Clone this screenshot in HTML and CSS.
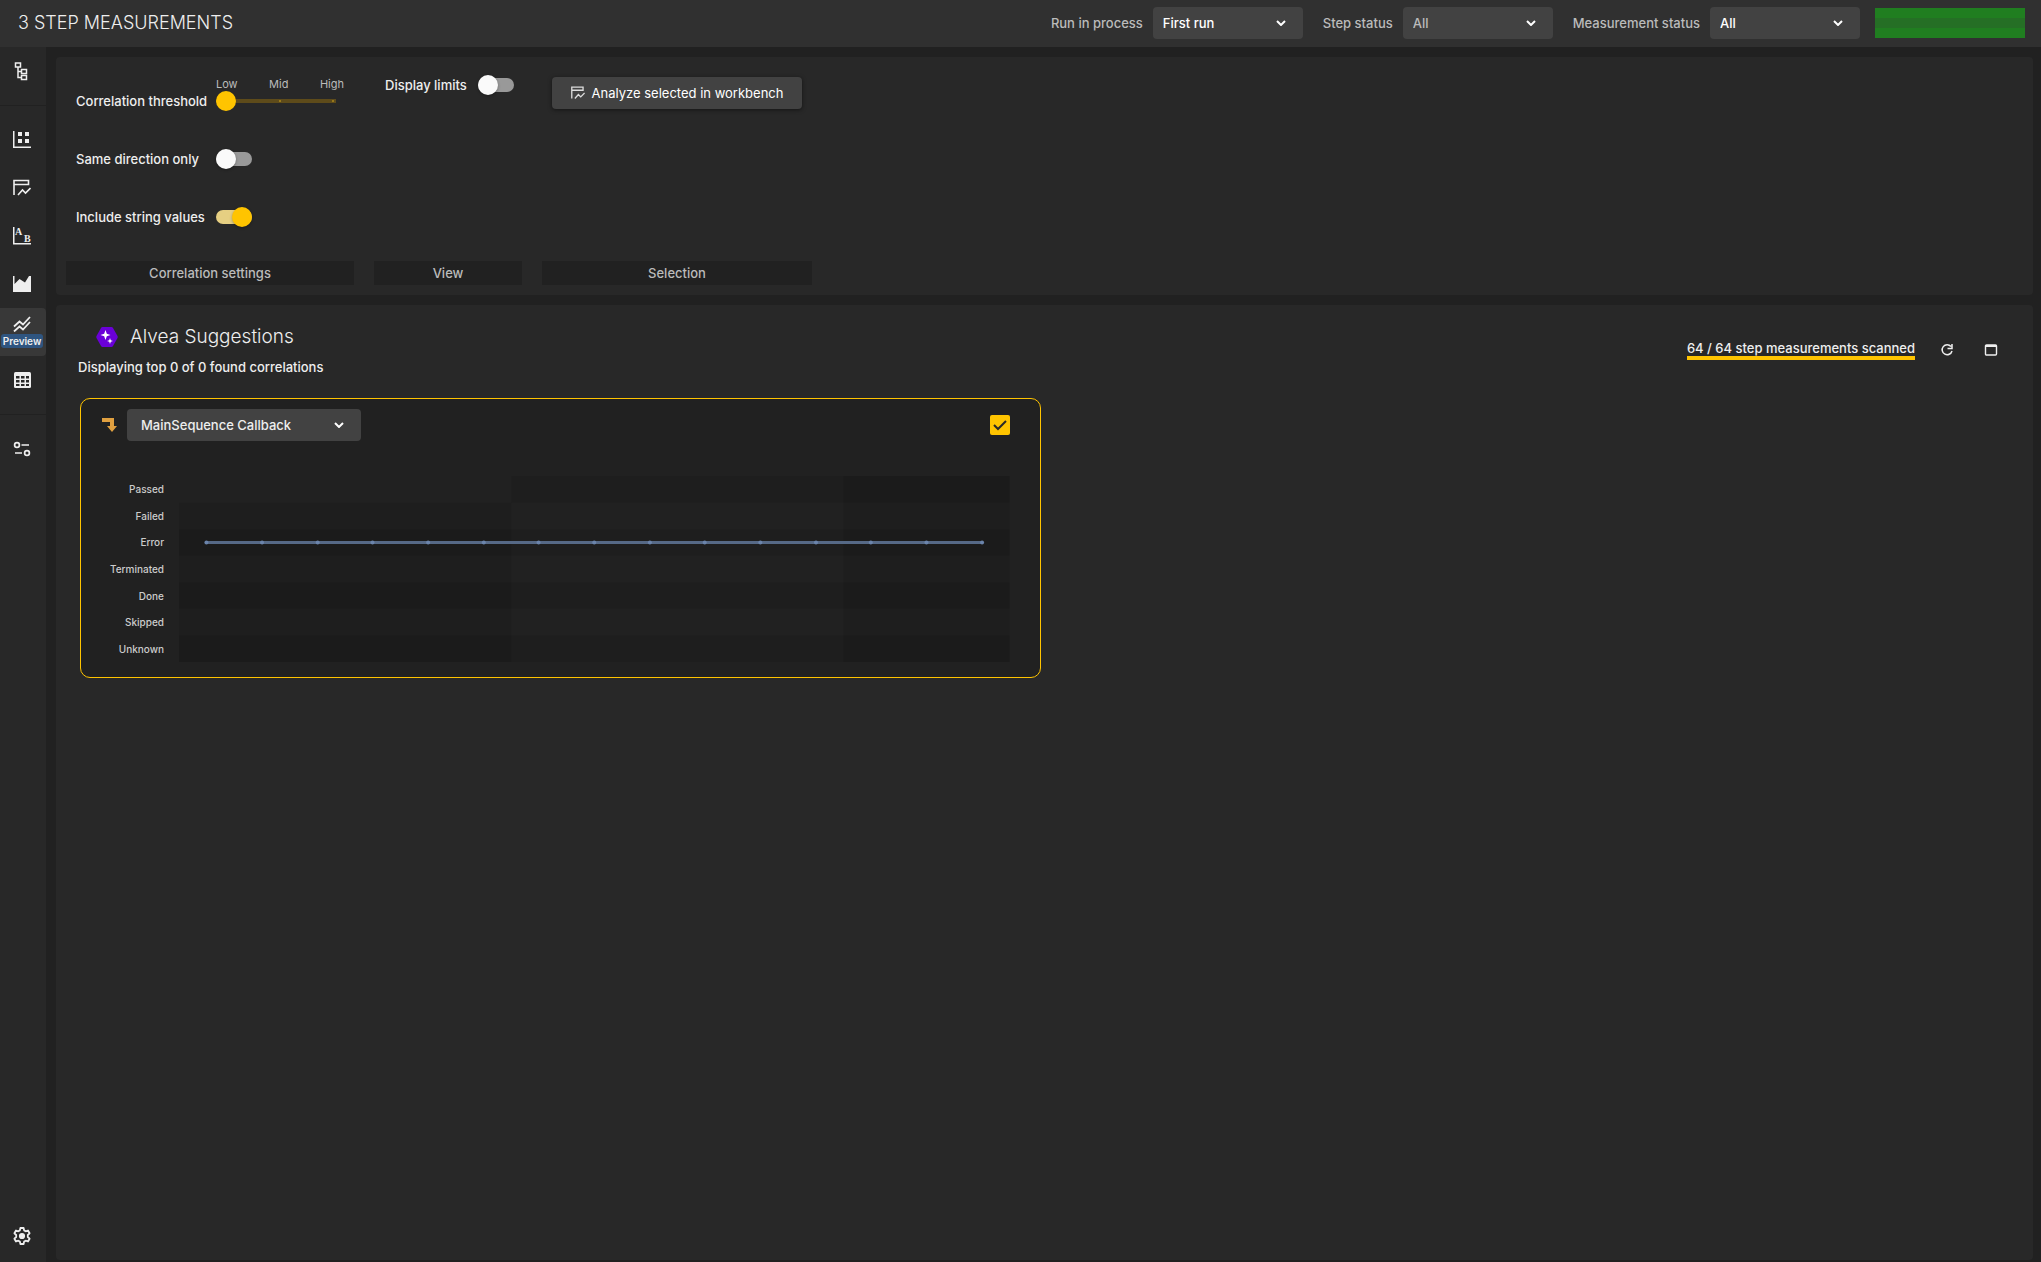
FILE: index.html
```html
<!DOCTYPE html>
<html lang="en">
<head>
    <meta charset="UTF-8">
    <meta name="viewport" content="width=device-width, initial-scale=1.0">
    <title>Step Measurements</title>
    <link rel="stylesheet" href="styles.css">
</head>
<body>

<header class="topbar">
    <h1>3 STEP MEASUREMENTS</h1>
    <div class="filters">
        <div class="filter">
            <label for="run">Run in process</label>
            <select id="run"><option>First run</option></select>
        </div>
        <div class="filter">
            <label for="stepStatus">Step status</label>
            <select id="stepStatus" class="muted"><option>All</option></select>
        </div>
        <div class="filter">
            <label for="measurementStatus">Measurement status</label>
            <select id="measurementStatus"><option>All</option></select>
        </div>
    </div>
    <div class="status-bar"></div>
</header>

<div class="layout">
    <nav class="sidebar">
        <div class="nav-group">
            <a href="#tree" aria-label="Tree">
                <svg width="18" height="20" viewBox="0 0 18 20" fill="none" stroke="#eee" stroke-width="1.5"><path d="M2.5 2h5v4h-5zM8.5 8.5h5v4h-5zM8.5 14.5h5v4h-5zM5 6v10.500h3.500M5 10.500h3.500"/></svg>
            </a>
        </div>
        <div class="nav-group">
            <a href="#overview" aria-label="Overview">
                <svg width="18" height="18" viewBox="0 0 18 18" fill="#eee"><path d="M0 0h1.500v15.500H18V17H0zM5 1h4v4H5zM12 1h4v4h-4zM5 8h4v4H5zM12 8h4v4h-4z"/></svg>
            </a>
            <a href="#workbench" aria-label="Workbench">
                <svg width="18" height="18" viewBox="0 0 18 18" fill="none" stroke="#eee" stroke-width="1.600"><path d="M1 16V1.500h14.500V5.500H1M5 16l4.500-5 3 3L17.500 9"/></svg>
            </a>
            <a href="#compare" aria-label="Compare">
                <svg width="18" height="18" viewBox="0 0 18 18" fill="#eee"><path d="M0 0h1.500v16H18v1.500H0z"/><text x="2" y="8" class="icon-letter">A</text><text x="11" y="15" class="icon-letter">B</text></svg>
            </a>
            <a href="#area" aria-label="Area chart">
                <svg width="18" height="18" viewBox="0 0 18 18" fill="#eee"><path d="M0 1h1.500v8L6.500 4l5.500 3.500L16 1h2v16H0z"/></svg>
            </a>
            <a href="#correlations" class="active">
                <svg width="18" height="16" viewBox="0 0 18 16" fill="none" stroke="#eee" stroke-width="1.800"><path d="M1 10.500l5.500-5 3.500 3 7-7.500M1 15.500l5.500-5 3.500 3 7-7.500"/></svg>
                <span class="badge">Preview</span>
            </a>
            <a href="#table" aria-label="Table">
                <svg width="18" height="18" viewBox="0 0 18 18"><rect x="1" y="1" width="17" height="16" rx="1.500" fill="#eee"/><path d="M3 5h3.500v2.500H3zM8 5h3.500v2.500H8zM13 5h3v2.500h-3zM3 9h3.500v2.500H3zM8 9h3.500v2.500H8zM13 9h3v2.500h-3zM3 13h3.500v2H3zM8 13h3.500v2H8zM13 13h3v2h-3z" fill="#282828"/></svg>
            </a>
        </div>
        <div class="nav-group">
            <a href="#filters" aria-label="Filters">
                <svg width="18" height="16" viewBox="0 0 18 16" fill="none" stroke="#eee" stroke-width="1.700"><circle cx="4" cy="4" r="2.400"/><path d="M8.500 4H16M2 12h7"/><circle cx="14" cy="12" r="2.400"/></svg>
            </a>
        </div>
        <a href="#settings" class="settings" aria-label="Settings">
            <svg width="18" height="18" viewBox="0 0 18 18" fill="none" stroke="#eee" stroke-width="1.800" stroke-linejoin="round"><path d="M7.400 1h3.200l.5 2.400 1.600.9 2.300-.8 1.600 2.800L14.800 8v2l1.800 1.700-1.600 2.800-2.300-.8-1.600.9-.5 2.400H7.400l-.5-2.400-1.600-.9-2.300.8-1.600-2.800L3.200 10V8L1.400 6.300 3 3.500l2.300.8 1.600-.9z"/><circle cx="9" cy="9" r="2.200" fill="#eee"/></svg>
        </a>
    </nav>

    <main>
        <section class="panel toolbar">
            <div class="group group-settings">
                <div class="setting">
                    <label for="threshold">Correlation threshold</label>
                    <div class="slider">
                        <div class="ticks"><span>Low</span><span>Mid</span><span>High</span></div>
                        <input type="range" id="threshold" min="0" max="2" value="0">
                    </div>
                </div>
                <div class="setting">
                    <label for="direction">Same direction only</label>
                    <input type="checkbox" class="switch" id="direction">
                </div>
                <div class="setting">
                    <label for="strings">Include string values</label>
                    <input type="checkbox" class="switch" id="strings" checked>
                </div>
                <h2>Correlation settings</h2>
            </div>
            <div class="group group-view">
                <div class="limits">
                    <label for="limits">Display limits</label>
                    <input type="checkbox" class="switch" id="limits">
                </div>
                <h2>View</h2>
            </div>
            <div class="group group-selection">
                <button type="button" class="analyze">
                    <svg width="14" height="14" viewBox="0 0 18 18" fill="none" stroke="#ddd" stroke-width="1.700"><path d="M1 16V1.500h14.500V5.500H1M5 16l4.500-5 3 3L17.500 9"/></svg>
                    Analyze selected in workbench
                </button>
                <h2>Selection</h2>
            </div>
        </section>

        <section class="panel suggestions">
            <div class="suggestions-header">
                <div>
                    <div class="heading">
                        <svg width="22" height="22" viewBox="0 0 22 22"><path d="M6.500 1h9q1 0 1.500 1l4.500 8q.5 1 0 2L17 20q-.5 1-1.500 1h-9q-1 0-1.500-1L.5 12q-.5-1 0-2L5 2q.5-1 1.500-1z" fill="#6a00d8"/><path d="M9.500 4l1.300 3.700L14.500 9l-3.700 1.300L9.500 14l-1.300-3.700L4.500 9l3.700-1.300zM14 12l.8 2.200 2.200.8-2.200.8L14 18l-.8-2.200L11 15l2.200-.8z" fill="#fff"/></svg>
                        <h2>Alvea Suggestions</h2>
                    </div>
                    <p>Displaying top 0 of 0 found correlations</p>
                </div>
                <div class="scan">
                    <span class="scanned">64 / 64 step measurements scanned</span>
                    <button type="button" class="icon-btn" aria-label="Refresh">
                        <svg width="14" height="14" viewBox="0 0 14 14" fill="none" stroke="#eee" stroke-width="1.500"><path d="M11 3.500A5 5 0 1 0 12 8M12 1v4.500H7.500"/></svg>
                    </button>
                    <button type="button" class="icon-btn" aria-label="Full window">
                        <svg width="14" height="14" viewBox="0 0 14 14" fill="none" stroke="#eee" stroke-width="1.400"><rect x="1.500" y="2" width="11" height="10" rx="1"/><path d="M1.500 3h11" stroke-width="2"/></svg>
                    </button>
                </div>
            </div>

            <div class="cards">
                <article class="card">
                    <div class="card-header">
                        <svg width="16" height="16" viewBox="0 0 16 16" fill="#e0a040"><path d="M1 1h12v8h3l-5 6-5-6h3V5H1z"/></svg>
                        <select aria-label="Step"><option>MainSequence Callback</option></select>
                        <input type="checkbox" class="tick" aria-label="Select step" checked>
                    </div>
                    <div class="chart">
                        <div class="axis">
                            <span>Passed</span>
                            <span>Failed</span>
                            <span>Error</span>
                            <span>Terminated</span>
                            <span>Done</span>
                            <span>Skipped</span>
                            <span>Unknown</span>
                        </div>
                        <svg class="plot">
                            <g class="bands">
                                <rect x="40%" y="0" width="60%" height="14.3%"/>
                                <rect x="0" y="28.6%" width="100%" height="14.3%"/>
                                <rect x="0" y="57.1%" width="100%" height="14.3%"/>
                                <rect x="0" y="85.7%" width="100%" height="14.3%"/>
                                <rect x="0" y="14.3%" width="40%" height="85.7%"/>
                                <rect x="80%" y="0" width="20%" height="100%"/>
                            </g>
                            <line x1="3.3%" y1="35.7%" x2="96.7%" y2="35.7%"/>
                            <g class="points">
                                <circle cx="3.3%" cy="35.7%" r="2"/>
                                <circle cx="10%" cy="35.7%" r="2"/>
                                <circle cx="16.7%" cy="35.7%" r="2"/>
                                <circle cx="23.3%" cy="35.7%" r="2"/>
                                <circle cx="30%" cy="35.7%" r="2"/>
                                <circle cx="36.7%" cy="35.7%" r="2"/>
                                <circle cx="43.3%" cy="35.7%" r="2"/>
                                <circle cx="50%" cy="35.7%" r="2"/>
                                <circle cx="56.7%" cy="35.7%" r="2"/>
                                <circle cx="63.3%" cy="35.7%" r="2"/>
                                <circle cx="70%" cy="35.7%" r="2"/>
                                <circle cx="76.7%" cy="35.7%" r="2"/>
                                <circle cx="83.3%" cy="35.7%" r="2"/>
                                <circle cx="90%" cy="35.7%" r="2"/>
                                <circle cx="96.7%" cy="35.7%" r="2"/>
                            </g>
                        </svg>
                    </div>
                </article>
            </div>
        </section>
    </main>
</div>

</body>
</html>
```

FILE: styles.css
```css
* {
    margin: 0;
    padding: 0;
    box-sizing: border-box;
}

body {
    display: flex;
    flex-direction: column;
    min-height: 100vh;
    background: #212121;
    color: #eee;
    font-family: Inter, sans-serif;
    font-size: 13px;
    font-weight: 500;
    line-height: 16px;
}

svg {
    display: block;
    flex-shrink: 0;
}

/* Top bar */
.topbar {
    display: flex;
    align-items: center;
    height: 47px;
    padding: 0 16px 1px 18px;
    background: #303030;
}

.topbar h1 {
    margin-right: auto;
    font-size: 18px;
    font-weight: 300;
    line-height: 24px;
}

.filters {
    display: flex;
    gap: 20px;
    margin-right: 15px;
}

.filter {
    display: flex;
    align-items: center;
    gap: 10px;
}

.filter label {
    color: #bbb;
}

select {
    appearance: none;
    width: 150px;
    height: 32px;
    padding: 0 36px 0 10px;
    border: none;
    border-radius: 4px;
    background: #424242 url("data:image/svg+xml,%3Csvg xmlns='http://www.w3.org/2000/svg' width='10' height='6' fill='none' stroke='white' stroke-width='2'%3E%3Cpath d='M1 1l4 4 4-4'/%3E%3C/svg%3E") no-repeat right 17px center;
    color: #fff;
    font: inherit;
}

select.muted {
    color: #bbb;
}

.status-bar {
    width: 150px;
    height: 30px;
    background: linear-gradient(#207e20 10px, #256f25 10px, #256f25 20px, #207e20 20px);
}

/* Sidebar */
.layout {
    display: flex;
    flex: 1;
}

.sidebar {
    display: flex;
    flex-direction: column;
    width: 46px;
    padding-bottom: 2px;
    background: #282828;
}

.nav-group {
    padding: 10px 0;
    border-bottom: 1px solid #212121;
}

.nav-group:first-child {
    padding-top: 0;
}

.nav-group:nth-child(3) {
    border-bottom: none;
}

.sidebar a {
    display: flex;
    flex-direction: column;
    align-items: center;
    justify-content: center;
    height: 48px;
    padding-right: 2px;
    color: #eee;
    text-decoration: none;
}

.sidebar .active {
    gap: 2px;
    border-radius: 0 4px 4px 0;
    background: #383838;
}

.sidebar .settings {
    margin-top: auto;
}

.icon-letter {
    font: 700 10px "Liberation Serif", serif;
}

.badge {
    padding: 0 2px;
    border-radius: 3px;
    background: #2f5580;
    font-size: 10px;
    font-weight: 600;
    line-height: 14px;
}

/* Panels */
main {
    display: flex;
    flex: 1;
    flex-direction: column;
    gap: 10px;
    padding: 10px 8px 2px 10px;
}

.panel {
    border-radius: 4px;
    background: #282828;
}

.toolbar {
    display: flex;
    gap: 20px;
    padding: 10px;
}

.group {
    display: flex;
    flex-direction: column;
}

.group-settings {
    width: 288px;
}

.group-view {
    width: 148px;
}

.group-selection {
    width: 270px;
}

.group h2 {
    margin-top: auto;
    background: #212121;
    color: #bbb;
    font-size: 13px;
    font-weight: 500;
    line-height: 24px;
    text-align: center;
}

.setting {
    display: grid;
    grid-template-columns: 140px 1fr;
    align-items: center;
    height: 58px;
    padding-left: 10px;
    line-height: 20px;
}

.setting:first-child {
    height: 63px;
    align-items: end;
    padding-bottom: 19px;
}

.setting:nth-child(3) {
    margin-bottom: 15px;
}

.slider {
    width: 128px;
}

.ticks {
    display: flex;
    justify-content: space-between;
    color: #bbb;
    font-size: 11px;
    font-weight: 400;
    line-height: 14px;
}

/* Track with a dot at the middle and last step */
input[type="range"] {
    display: block;
    appearance: none;
    width: 120px;
    height: 20px;
    background:
        linear-gradient(#97781b, #97781b) no-repeat 63px 9px / 2px 2px,
        linear-gradient(#97781b, #97781b) no-repeat 116px 9px / 2px 2px,
        linear-gradient(#5e4b1a, #5e4b1a) no-repeat center / 100% 4px;
}

input[type="range"]::-webkit-slider-thumb {
    appearance: none;
    width: 20px;
    height: 20px;
    border-radius: 50%;
    background: #ffc400;
}

.switch {
    display: flex;
    align-items: center;
    appearance: none;
    flex-shrink: 0;
    width: 36px;
    height: 14px;
    border-radius: 7px;
    background: #999;
}

.switch::before {
    content: "";
    width: 20px;
    height: 20px;
    flex-shrink: 0;
    border-radius: 50%;
    background: #fafafa;
    box-shadow: 0 1px 3px rgba(0, 0, 0, 0.3);
}

.switch:checked {
    justify-content: flex-end;
    background: #e6cf82;
}

.switch:checked::before {
    background: #ffc400;
}

.limits {
    display: flex;
    align-items: center;
    gap: 11px;
    padding: 10px 0 0 11px;
    white-space: nowrap;
}

.analyze {
    display: flex;
    align-items: center;
    justify-content: center;
    gap: 7px;
    height: 32px;
    margin: 10px 10px 0;
    border: none;
    border-radius: 4px;
    background: #424242;
    box-shadow: 0 1px 4px rgba(0, 0, 0, 0.5);
    color: #fff;
    font: inherit;
    font-weight: 400;
}

/* Suggestions */
.suggestions {
    flex: 1;
    padding: 18px 12px 24px 24px;
}

.suggestions-header {
    display: flex;
    justify-content: space-between;
    margin-bottom: 21px;
}

.heading {
    display: flex;
    align-items: center;
    gap: 12px;
    padding-left: 16px;
    margin-bottom: 8px;
}

.heading h2 {
    font-size: 19px;
    font-weight: 300;
    line-height: 28px;
}

.suggestions-header p {
    margin-left: -2px;
}

.scan {
    display: flex;
    align-items: center;
    gap: 16px;
    height: 54px;
    padding-right: 16px;
}

.scanned {
    border-bottom: 4px solid #ffc400;
    margin-right: 2px;
}

.icon-btn {
    display: grid;
    place-items: center;
    width: 28px;
    height: 28px;
    border: none;
    background: none;
}

.cards {
    display: grid;
    grid-template-columns: 1fr 1fr;
    gap: 20px;
}

.card {
    padding: 10px 30px 15px 20px;
    border: 1px solid #ffc400;
    border-radius: 10px;
    background: #212121;
}

.card-header {
    display: flex;
    align-items: center;
    gap: 10px;
    margin-bottom: 35px;
}

.card-header select {
    width: 234px;
    padding-left: 14px;
    color: #eee;
}

.tick {
    appearance: none;
    width: 20px;
    height: 20px;
    margin-left: auto;
    border-radius: 2px;
    background: #424242;
}

.tick:checked {
    background: #ffc400 url("data:image/svg+xml,%3Csvg xmlns='http://www.w3.org/2000/svg' width='14' height='12' fill='none' stroke='%23282828' stroke-width='2'%3E%3Cpath d='M1 6l4 4 8-8'/%3E%3C/svg%3E") no-repeat center;
}

.chart {
    display: flex;
    gap: 15px;
}

.axis {
    display: grid;
    grid-template-rows: repeat(7, 1fr);
    align-items: center;
    width: 63px;
    color: #ccc;
    font-size: 10px;
    line-height: 12px;
    text-align: right;
}

.plot {
    flex: 1;
    min-width: 0;
    height: 186px;
}

.bands {
    fill: #000;
    fill-opacity: 0.07;
}

.plot line {
    stroke: #566986;
    stroke-width: 3;
}

.points {
    fill: #6b84ab;
}
```
